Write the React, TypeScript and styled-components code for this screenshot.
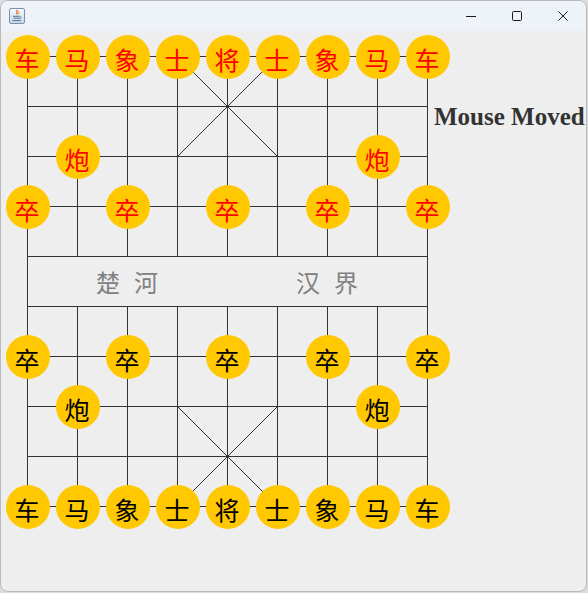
import React from "react";
import styled, { createGlobalStyle } from "styled-components";

const GlobalStyle = createGlobalStyle`
  html, body { margin: 0; padding: 0; }
  body {
    background: #dcdcdc;
    width: 588px;
    height: 593px;
    overflow: hidden;
    font-family: "Noto Sans CJK SC", "Noto Sans", sans-serif;
  }
`;

const Window = styled.div`
  box-sizing: border-box;
  width: 587px;
  height: 592px;
  border: 1px solid #b9b9b9;
  border-radius: 8px;
  overflow: hidden;
  display: flex;
  flex-direction: column;
  background: #eeeeee;
`;

const TitleBar = styled.div`
  height: 30px;
  flex: none;
  background: #eef3f9;
  display: flex;
  align-items: center;
  padding-left: 8px;
`;

const AppIcon = styled.svg`
  width: 16px;
  height: 16px;
  margin-top: -1px;
`;

const Spacer = styled.div`
  flex: 1;
`;

const Controls = styled.div`
  display: flex;
  height: 100%;
`;

const ControlButton = styled.div`
  width: 46px;
  height: 100%;
  display: flex;
  align-items: center;
  justify-content: center;
  svg { display: block; }
`;

const Content = styled.div`
  flex: 1;
  display: flex;
  align-items: flex-start;
`;

const Board = styled.div`
  position: relative;
  flex: none;
  width: 432px;
  height: 510px;
`;

const Grid = styled.svg`
  position: absolute;
  left: 0;
  top: 0;
`;

const Piece = styled.div<{ $col: number; $row: number; $red: boolean }>`
  position: absolute;
  left: ${(p) => 5 + p.$col * 50}px;
  top: ${(p) => 4 + p.$row * 50}px;
  width: 44px;
  height: 44px;
  box-sizing: border-box;
  border-radius: 50%;
  background: #ffc800;
  color: ${(p) => (p.$red ? "#ff0000" : "#000000")};
  display: flex;
  align-items: center;
  justify-content: center;
  padding-top: 4px;
  padding-right: 2px;
  font-family: "Noto Sans CJK SC", sans-serif;
  font-size: 25px;
  line-height: 25px;
`;

const River = styled.div<{ $left: number; $gap: number }>`
  position: absolute;
  left: ${(p) => p.$left}px;
  top: 239px;
  display: flex;
  gap: ${(p) => p.$gap}px;
  color: #808080;
  font-family: "Noto Sans CJK SC", sans-serif;
  font-size: 24px;
  line-height: 24px;
`;

const Status = styled.div`
  margin-top: 73px;
  margin-left: 1px;
  font-family: "Liberation Serif", "Times New Roman", serif;
  font-weight: bold;
  font-size: 25px;
  line-height: 25px;
  color: #333333;
  white-space: nowrap;
`;

const topRow = ["车", "马", "象", "士", "将", "士", "象", "马", "车"];

type P = { c: number; r: number; t: string; red: boolean };
const pieces: P[] = [];
topRow.forEach((t, c) => pieces.push({ c, r: 0, t, red: true }));
[1, 7].forEach((c) => pieces.push({ c, r: 2, t: "炮", red: true }));
[0, 2, 4, 6, 8].forEach((c) => pieces.push({ c, r: 3, t: "卒", red: true }));
[0, 2, 4, 6, 8].forEach((c) => pieces.push({ c, r: 6, t: "卒", red: false }));
[1, 7].forEach((c) => pieces.push({ c, r: 7, t: "炮", red: false }));
topRow.forEach((t, c) => pieces.push({ c, r: 9, t, red: false }));

const X0 = 26.5;
const Y0 = 25.5;
const S = 50;

function BoardLines() {
  const lines: React.ReactElement[] = [];
  for (let r = 0; r < 10; r++) {
    lines.push(
      <line key={`h${r}`} x1={X0} y1={Y0 + r * S} x2={X0 + 8 * S} y2={Y0 + r * S} />
    );
  }
  for (let c = 0; c < 9; c++) {
    if (c === 0 || c === 8) {
      lines.push(
        <line key={`v${c}`} x1={X0 + c * S} y1={Y0} x2={X0 + c * S} y2={Y0 + 9 * S} />
      );
    } else {
      lines.push(
        <line key={`va${c}`} x1={X0 + c * S} y1={Y0} x2={X0 + c * S} y2={Y0 + 4 * S} />,
        <line key={`vb${c}`} x1={X0 + c * S} y1={Y0 + 5 * S} x2={X0 + c * S} y2={Y0 + 9 * S} />
      );
    }
  }
  const palace = (r0: number, k: string) => [
    <line key={`${k}a`} x1={X0 + 3 * S} y1={Y0 + r0 * S} x2={X0 + 5 * S} y2={Y0 + (r0 + 2) * S} />,
    <line key={`${k}b`} x1={X0 + 5 * S} y1={Y0 + r0 * S} x2={X0 + 3 * S} y2={Y0 + (r0 + 2) * S} />,
  ];
  return (
    <Grid width={432} height={510} viewBox="0 0 432 510">
      <g stroke="#333333" strokeWidth={1} shapeRendering="crispEdges">
        {lines}
        {palace(0, "p1")}
        {palace(7, "p2")}
      </g>
    </Grid>
  );
}

function JavaIcon() {
  return (
    <AppIcon viewBox="0 0 16 16">
      <defs>
        <linearGradient id="jg" x1="0" y1="0" x2="0" y2="1">
          <stop offset="0" stopColor="#f7fafd" />
          <stop offset="1" stopColor="#c6d6e6" />
        </linearGradient>
      </defs>
      <rect x="0.5" y="0.5" width="15" height="15" rx="1.5" fill="url(#jg)" stroke="#7d92aa" />
      <path d="M8.3 2 C6.6 3.6 9.4 4.2 7.6 6.4" fill="none" stroke="#e05a1c" strokeWidth="1.2" />
      <path d="M9.8 3.4 C8.8 4.5 10.4 5 9.4 6.3" fill="none" stroke="#f08a2c" strokeWidth="0.9" />
      <path d="M4 8.3 H10.6 M4.5 10.2 H10 M3.5 12.6 H12" fill="none" stroke="#50769e" strokeWidth="1" />
      <path d="M10.6 8.4 C12.6 8.4 12.6 10.6 10.2 10.6" fill="none" stroke="#50769e" strokeWidth="0.9" />
    </AppIcon>
  );
}

export default function App() {
  return (
    <>
      <GlobalStyle />
      <Window>
        <TitleBar>
          <JavaIcon />
          <Spacer />
          <Controls>
            <ControlButton>
              <svg width="10" height="10" viewBox="0 0 10 10">
                <line x1="0" y1="5.5" x2="10" y2="5.5" stroke="#1b1b1b" strokeWidth="1" />
              </svg>
            </ControlButton>
            <ControlButton>
              <svg width="10" height="10" viewBox="0 0 10 10">
                <rect x="0.5" y="0.5" width="9" height="9" rx="1" fill="none" stroke="#1b1b1b" strokeWidth="1" />
              </svg>
            </ControlButton>
            <ControlButton>
              <svg width="10" height="10" viewBox="0 0 10 10">
                <path d="M0.5 0.5 L9.5 9.5 M9.5 0.5 L0.5 9.5" stroke="#1b1b1b" strokeWidth="1" />
              </svg>
            </ControlButton>
          </Controls>
        </TitleBar>
        <Content>
          <Board>
            <BoardLines />
            <River $left={95} $gap={14}>
              <span>楚</span>
              <span>河</span>
            </River>
            <River $left={295} $gap={14}>
              <span>汉</span>
              <span>界</span>
            </River>
            {pieces.map((p, i) => (
              <Piece key={i} $col={p.c} $row={p.r} $red={p.red}>
                {p.t}
              </Piece>
            ))}
          </Board>
          <Status>Mouse Moved</Status>
        </Content>
      </Window>
    </>
  );
}
